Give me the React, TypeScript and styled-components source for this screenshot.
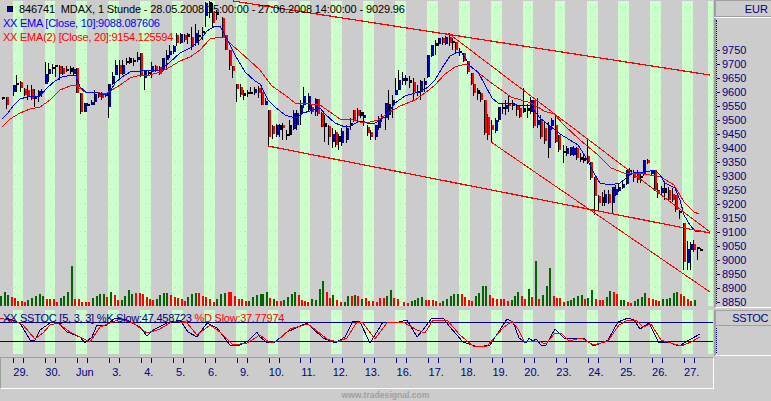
import React from "react";
import styled, { createGlobalStyle } from "styled-components";

const GlobalStyle = createGlobalStyle`
  html, body { margin: 0; padding: 0; background: #cccccc; }
  #root { width: 771px; height: 401px; overflow: hidden; }
`;

const NAVY = "#000080";
const FONT = `"Liberation Sans", Arial, sans-serif`;

const Page = styled.div`
  width: 771px;
  height: 401px;
  display: flex;
  flex-direction: column;
  background: #cccccc;
  font-family: ${FONT};
  font-size: 11px;
`;
const TopRow = styled.div`
  display: flex;
  height: 389px;
`;
const LeftCol = styled.div`
  width: 714px;
  display: flex;
  flex-direction: column;
`;
const RightCol = styled.div`
  width: 57px;
  display: flex;
  flex-direction: column;
  color: ${NAVY};
`;
const ChartPane = styled.div`
  position: relative;
  height: 306px;
  line-height: 0;
`;
const StochPane = styled.div`
  position: relative;
  height: 44px;
  margin-top: 4px;
  line-height: 0;
`;
const Drawing = styled.svg`
  display: block;
  shape-rendering: crispEdges;
`;
const Legend = styled.div`
  position: absolute;
  left: 3px;
  top: 2px;
  display: flex;
  flex-direction: column;
  line-height: 14px;
  white-space: pre;
`;
const LegendRow = styled.div<{ $color: string; $tracking: number }>`
  display: flex;
  align-items: center;
  height: 14px;
  color: ${(p) => p.$color};
  letter-spacing: ${(p) => p.$tracking}px;
`;
const SeriesMark = styled.span`
  width: 6px;
  height: 6px;
  margin: 0 6px 0 4px;
  background: #0000a0;
  border: 1px solid #000;
  box-sizing: border-box;
`;
const StochLegend = styled.div`
  position: absolute;
  left: 3px;
  top: 1px;
  line-height: 14px;
  color: ${NAVY};
  white-space: pre;
  letter-spacing: -0.24px;
`;
const RedText = styled.span`
  color: #ff0000;
`;
const TimeAxis = styled.div`
  margin-top: 3px;
  height: 30px;
  display: flex;
  padding-left: 12px;
  border-top: 1px solid #a0a0a0;
  border-left: 1px solid #a0a0a0;
  border-right: 1px solid #ffffff;
  border-bottom: 1px solid #ffffff;
`;
const DayCell = styled.div`
  width: 31.95px;
  flex: none;
  display: flex;
  flex-direction: column;
  align-items: flex-start;
`;
const TickPair = styled.div`
  width: 9px;
  height: 5px;
  border-left: 1px solid ${NAVY};
  border-right: 1px solid ${NAVY};
`;
const DayLabel = styled.div`
  width: 16px;
  margin-top: 2px;
  display: flex;
  justify-content: center;
  line-height: 14px;
  color: ${NAVY};
  white-space: nowrap;
`;
const EurBox = styled.div`
  height: 15px;
  border-top: 1px solid #a0a0a0;
  border-left: 2px solid #a0a0a0;
  border-bottom: 1px solid #a0a0a0;
  display: flex;
  align-items: center;
  justify-content: flex-end;
  padding-right: 3px;
  box-shadow: 0 1px 0 #ffffff;
`;
const PriceAxis = styled.div`
  height: 290px;
  margin-top: 1px;
  box-sizing: border-box;
  border-left: 2px solid #a0a0a0;
  padding: 2px 0 0 0;
  border-bottom: 1px solid #ffffff;
`;
const PriceTrack = styled.div`
  border-left: 1px dotted ${NAVY};
  height: 284px;
  padding-top: 23px;
  box-sizing: border-box;
`;
const PriceRow = styled.div`
  height: 14px;
  display: flex;
  align-items: center;
  gap: 2px;
  line-height: 14px;
`;
const PriceTick = styled.span`
  width: 3px;
  height: 1px;
  background: ${NAVY};
`;
const SstocBox = styled.div`
  margin-top: 2px;
  height: 14px;
  border-top: 1px solid #a0a0a0;
  border-left: 2px solid #a0a0a0;
  border-bottom: 1px solid #a0a0a0;
  display: flex;
  align-items: center;
  justify-content: flex-end;
  padding-right: 3px;
  letter-spacing: -0.4px;
`;
const StochAxis = styled.div`
  height: 30px;
  box-sizing: border-box;
  border-left: 2px solid #a0a0a0;
  border-bottom: 1px solid #ffffff;
  padding-top: 2px;
`;
const StochTrack = styled.div`
  height: 25px;
  border-left: 1px dotted ${NAVY};
`;
const Footer = styled.div`
  height: 12px;
  display: flex;
  justify-content: center;
  align-items: center;
  line-height: 12px;
  color: #a0a0a0;
  font-size: 8.6px;
  font-weight: bold;
`;

const bandStarts = [13, 45, 76, 108, 140, 172, 204, 236, 268, 300, 331, 363, 395, 427, 459, 491, 523, 555, 587, 618, 650, 682];
const bands: [number, number][] = [
  ...bandStarts.map((s): [number, number] => [s, s === 13 || s === 45 || s === 300 || s === 268 || s === 523 || s === 555 ? 10 : 11]),
  [708, 5],
];
const days = ["29.", "30.", "Jun", "3.", "4.", "5.", "6.", "9.", "10.", "11.", "12.", "13.", "16.", "17.", "18.", "19.", "20.", "23.", "24.", "25.", "26.", "27."];
const prices = Array.from({ length: 19 }, (_, i) => 9750 - i * 50);

type C = "b" | "r" | "k";
type Candle = [number, number, number, number, number, C];
const candles: Candle[] = [
  [2, 97, 97, 99, 100, "k"], [6, 97, 97, 105, 109, "r"], [13, 85, 85, 92, 96, "b"], [16, 75, 83, 85, 92, "k"],
  [20, 81, 82, 88, 92, "r"], [24, 88, 89, 95, 96, "r"], [27, 85, 90, 96, 100, "r"], [31, 85, 89, 99, 100, "r"],
  [34, 89, 96, 99, 107, "k"], [38, 90, 91, 96, 102, "b"], [41, 89, 91, 93, 97, "k"], [45, 62, 74, 84, 84, "b"],
  [48, 63, 69, 74, 82, "b"], [52, 64, 67, 69, 74, "k"], [55, 65, 65, 67, 77, "k"], [59, 65, 66, 74, 80, "r"],
  [62, 66, 68, 74, 75, "r"], [66, 66, 69, 71, 72, "k"], [70, 66, 68, 72, 74, "k"], [73, 67, 69, 74, 76, "b"],
  [76, 68, 68, 93, 93, "r"], [80, 93, 93, 112, 114, "r"], [84, 103, 103, 112, 112, "b"], [87, 103, 104, 105, 106, "k"],
  [91, 100, 102, 105, 105, "b"], [94, 90, 94, 102, 105, "b"], [98, 92, 93, 97, 98, "r"], [101, 92, 93, 98, 100, "r"],
  [105, 93, 94, 96, 97, "k"], [108, 84, 84, 107, 118, "b"], [112, 72, 76, 84, 85, "b"], [115, 60, 65, 75, 75, "b"],
  [119, 60, 65, 74, 80, "r"], [122, 60, 65, 74, 75, "b"], [126, 58, 61, 62, 65, "k"], [129, 57, 58, 63, 64, "k"],
  [133, 58, 60, 62, 66, "k"], [137, 52, 57, 60, 62, "b"], [140, 53, 53, 75, 77, "r"], [144, 70, 70, 78, 90, "b"],
  [148, 70, 72, 73, 76, "k"], [151, 62, 66, 72, 78, "b"], [155, 65, 66, 70, 72, "r"], [159, 66, 67, 74, 75, "r"],
  [162, 58, 58, 70, 72, "b"], [166, 50, 55, 60, 70, "b"], [169, 45, 51, 55, 58, "b"], [173, 45, 46, 52, 54, "b"],
  [176, 33, 35, 43, 46, "r"], [180, 33, 34, 43, 44, "b"], [184, 34, 35, 40, 42, "r"], [187, 33, 34, 37, 44, "k"],
  [191, 27, 37, 47, 50, "r"], [195, 24, 33, 43, 46, "b"], [198, 30, 35, 37, 45, "k"], [202, 27, 31, 33, 40, "k"],
  [205, 2, 3, 16, 27, "b"], [209, 1, 2, 13, 18, "k"], [212, 3, 12, 23, 27, "r"], [216, 10, 12, 15, 20, "k"],
  [222, 17, 18, 37, 38, "r"], [225, 35, 35, 50, 50, "r"], [229, 50, 50, 66, 70, "r"], [232, 66, 66, 71, 78, "r"],
  [236, 84, 84, 89, 102, "r"], [240, 84, 87, 95, 97, "r"], [243, 90, 93, 96, 100, "k"], [247, 90, 92, 93, 97, "k"],
  [250, 87, 92, 94, 94, "k"], [254, 87, 89, 93, 95, "b"], [258, 86, 88, 93, 98, "r"], [261, 85, 92, 105, 105, "r"],
  [265, 98, 101, 105, 105, "b"], [268, 110, 110, 137, 147, "r"], [272, 125, 126, 134, 139, "r"], [276, 124, 125, 135, 137, "b"],
  [279, 124, 125, 130, 137, "k"], [282, 123, 125, 128, 140, "r"], [286, 130, 134, 136, 140, "k"], [289, 120, 125, 135, 136, "k"],
  [293, 110, 113, 129, 130, "b"], [296, 110, 113, 125, 130, "b"], [300, 100, 105, 113, 125, "b"], [303, 87, 96, 105, 108, "b"],
  [308, 93, 96, 110, 112, "b"], [311, 104, 107, 112, 114, "r"], [315, 98, 99, 112, 116, "b"], [317, 99, 99, 114, 116, "r"],
  [321, 112, 113, 127, 127, "r"], [324, 115, 123, 127, 142, "k"], [328, 125, 126, 137, 145, "r"], [332, 128, 134, 142, 148, "b"],
  [335, 130, 132, 145, 147, "r"], [338, 134, 136, 142, 150, "k"], [341, 128, 131, 143, 146, "b"], [346, 125, 128, 140, 143, "b"],
  [350, 118, 123, 126, 130, "k"], [353, 110, 110, 120, 122, "r"], [357, 108, 110, 116, 122, "r"], [360, 110, 112, 116, 118, "k"],
  [363, 112, 115, 118, 126, "b"], [367, 125, 127, 133, 136, "r"], [370, 130, 132, 137, 140, "r"], [375, 125, 125, 137, 140, "b"],
  [378, 116, 118, 128, 130, "b"], [381, 114, 116, 118, 122, "k"], [385, 103, 103, 118, 130, "b"], [388, 90, 104, 115, 120, "k"],
  [392, 95, 100, 104, 118, "b"], [395, 78, 90, 95, 95, "b"], [398, 70, 80, 90, 90, "b"], [402, 72, 78, 81, 85, "b"],
  [405, 75, 78, 81, 85, "k"], [409, 76, 80, 83, 88, "k"], [413, 78, 82, 92, 100, "r"], [417, 85, 91, 93, 96, "k"],
  [420, 80, 81, 92, 100, "b"], [424, 78, 81, 85, 92, "b"], [427, 55, 55, 77, 78, "b"], [431, 45, 45, 56, 57, "b"],
  [435, 40, 43, 46, 55, "k"], [438, 38, 38, 44, 46, "b"], [442, 37, 38, 43, 45, "r"], [445, 36, 37, 44, 45, "b"],
  [449, 33, 37, 43, 46, "r"], [452, 38, 41, 43, 50, "k"], [455, 42, 42, 50, 54, "r"], [459, 48, 51, 53, 56, "k"],
  [463, 53, 53, 61, 62, "r"], [467, 61, 61, 72, 74, "r"], [471, 73, 73, 84, 85, "r"], [473, 84, 84, 93, 96, "r"],
  [477, 88, 90, 94, 100, "k"], [480, 92, 93, 100, 102, "r"], [484, 100, 100, 133, 135, "r"], [487, 114, 117, 135, 140, "r"],
  [491, 120, 125, 130, 142, "r"], [495, 118, 120, 131, 133, "b"], [498, 107, 107, 120, 122, "b"], [502, 104, 107, 109, 114, "k"],
  [505, 100, 105, 109, 115, "b"], [508, 96, 104, 106, 112, "r"], [512, 100, 103, 106, 110, "k"], [516, 104, 105, 110, 116, "r"],
  [519, 106, 108, 117, 118, "r"], [523, 88, 108, 112, 113, "k"], [527, 104, 108, 111, 118, "k"], [530, 97, 100, 112, 114, "b"],
  [533, 100, 100, 126, 128, "r"], [537, 98, 120, 125, 128, "b"], [540, 115, 119, 137, 139, "r"], [544, 122, 128, 141, 144, "r"],
  [548, 122, 126, 148, 158, "b"], [551, 118, 120, 126, 130, "b"], [555, 114, 125, 142, 143, "r"], [558, 135, 135, 150, 152, "r"],
  [563, 145, 151, 153, 163, "k"], [566, 146, 148, 154, 156, "b"], [570, 147, 147, 155, 156, "b"], [573, 146, 148, 155, 156, "b"],
  [576, 147, 148, 158, 160, "r"], [580, 153, 157, 160, 162, "k"], [583, 155, 158, 161, 163, "k"], [587, 140, 156, 162, 164, "r"],
  [590, 162, 162, 178, 180, "r"], [594, 177, 177, 196, 215, "r"], [598, 195, 196, 203, 210, "r"], [602, 192, 197, 203, 206, "b"],
  [604, 190, 194, 203, 206, "b"], [608, 190, 194, 203, 204, "r"], [612, 187, 187, 203, 214, "b"], [615, 185, 189, 195, 196, "b"],
  [618, 183, 187, 191, 192, "b"], [622, 180, 184, 188, 189, "b"], [626, 170, 170, 184, 185, "b"], [629, 168, 170, 172, 175, "k"],
  [633, 170, 172, 178, 182, "r"], [637, 170, 172, 180, 183, "r"], [640, 172, 176, 178, 183, "k"], [643, 160, 160, 175, 176, "b"],
  [647, 159, 160, 163, 164, "r"], [651, 170, 171, 174, 176, "b"], [654, 170, 170, 190, 191, "r"], [657, 183, 190, 193, 198, "r"],
  [661, 186, 188, 193, 195, "b"], [664, 183, 188, 193, 200, "k"], [668, 187, 190, 200, 201, "r"], [672, 188, 194, 200, 202, "r"],
  [675, 195, 195, 210, 212, "r"], [679, 210, 211, 213, 219, "k"], [683, 223, 223, 262, 270, "r"], [687, 241, 249, 263, 270, "b"],
  [690, 242, 244, 250, 270, "b"], [693, 240, 244, 250, 252, "r"], [697, 248, 247, 249, 260, "k"], [700, 248, 249, 250, 251, "k"],
];

const blueEma = "2,119 8,113 14,105 20,99 27,97 33,96 40,96 47,88 55,81 62,77 72,75 76,76 80,87 86,92 94,92 106,95 110,92 115,83 122,77 130,72 140,71 150,70 160,70 170,62 180,53 190,48 200,40 207,31 215,26 220,26 226,37 235,55 245,72 255,81 260,84 268,100 275,107 285,115 295,118 303,113 310,111 320,108 325,114 335,123 345,127 350,126 358,122 362,121 370,124 375,123 385,117 395,103 405,96 415,93 420,92 428,87 435,80 442,68 450,56 458,52 462,53 470,66 478,72 485,85 492,98 498,103 510,103 520,106 530,105 540,118 550,126 560,134 570,140 578,145 585,156 590,165 595,175 600,183 610,185 620,183 630,175 635,172 645,172 655,170 660,175 665,183 675,188 680,200 684,215 690,225 695,231 700,232";
const redEma = "2,127 10,119 20,113 30,109 40,107 50,100 60,90 70,86 75,85 85,92 95,92 105,94 112,90 120,85 130,78 140,75 150,75 160,72 170,67 180,61 190,57 200,50 210,39 220,37 225,38 232,45 240,52 250,61 260,70 272,86 285,95 295,103 310,104 320,105 330,112 340,119 350,119 360,122 370,122 378,120 390,112 400,106 415,100 425,93 435,85 445,74 455,67 465,64 470,66 480,74 490,82 500,89 511,97 521,100 531,103 538,107 544,111 554,114 564,125 580,140 598,155 611,168 624,173 644,174 661,177 674,185 684,202 694,212 699,214";
const stochK = "6,318 20,323 30,340 35,340 40,330 50,323 58,322 67,332 80,337 85,343 92,337 97,325 107,325 115,318 127,320 140,327 147,336 153,330 167,323 180,320 188,332 197,337 207,323 217,328 230,345 240,345 248,341 257,332 260,337 268,343 275,342 287,332 307,323 323,338 335,343 345,337 353,321 360,322 370,343 383,322 395,323 407,320 417,337 423,330 432,318 443,318 450,327 463,342 478,347 490,345 507,319 513,322 519,338 526,343 529,338 533,341 536,339 541,345 546,345 555,329 564,338 573,338 583,338 594,346 608,340 618,322 628,318 634,320 640,329 649,323 659,343 668,342 679,346 691,339 700,334";
const stochD = "0,318 17,322 23,325 35,339 43,333 50,325 58,323 70,332 80,337 90,342 100,327 110,323 120,319 133,323 147,333 160,329 173,321 187,323 197,335 210,325 220,332 233,345 247,343 260,335 270,343 277,341 290,329 308,324 327,339 337,342 347,338 357,322 363,323 375,339 387,323 403,322 417,330 425,333 433,320 447,320 460,335 473,346 487,346 503,328 512,321 518,329 524,341 538,341 546,344 554,334 561,333 569,341 581,338 594,345 608,341 619,325 628,320 636,320 643,327 651,324 661,340 671,343 681,346 691,342 700,337";

type V = [number, number, "g" | "r"];
const seg = (base: number, items: V[]): V[] => items.map(([x, h, c]): V => [base + x / 3, h, c]);
const volumes: V[] = [
  ...seg(0, [[4,10,"g"],[15,14,"g"],[25,11,"g"],[35,9,"r"],[45,8,"r"],[55,5,"r"],[65,5,"r"],[75,4,"r"],[85,6,"g"],[97,8,"g"],[108,10,"g"],[120,12,"g"],[130,10,"g"],[140,7,"r"],[151,7,"r"],[162,7,"r"],[172,4,"r"],[183,8,"g"],[193,10,"g"],[204,14,"g"],[215,40,"g"],[225,7,"r"],[237,7,"r"],[247,4,"r"],[258,4,"r"],[268,4,"r"],[279,8,"g"],[290,10,"g"],[300,12,"g"],[312,12,"g"],[322,9,"r"],[333,14,"g"],[345,11,"r"],[355,6,"r"],[365,6,"g"],[375,10,"g"],[387,16,"g"],[397,12,"g"],[409,13,"r"],[419,13,"r"],[430,12,"r"],[440,9,"r"],[450,7,"r"],[460,6,"r"],[470,7,"g"],[480,11,"g"],[492,13,"g"],[502,13,"g"],[514,11,"r"],[525,9,"r"],[535,8,"r"],[545,7,"r"],[555,5,"r"],[565,9,"g"],[577,12,"g"],[587,13,"g"],[597,13,"r"],[608,10,"r"],[618,9,"r"],[630,7,"r"],[642,4,"r"],[652,7,"g"],[662,12,"g"],[674,13,"g"],[686,14,"r"],[694,14,"r"],[705,10,"r"],[717,7,"r"],[727,7,"r"],[737,5,"r"],[748,5,"g"],[758,9,"g"],[770,11,"g"]]),
  ...seg(260, [[3,12,"g"],[10,12,"g"],[20,14,"g"],[30,8,"r"],[42,7,"g"],[52,5,"r"],[62,5,"r"],[72,6,"g"],[84,9,"g"],[96,12,"g"],[105,14,"g"],[116,11,"r"],[125,6,"r"],[135,5,"r"],[145,4,"r"],[157,7,"g"],[167,6,"g"],[180,17,"g"],[188,25,"g"],[200,14,"r"],[210,8,"r"],[220,11,"g"],[232,6,"r"],[243,4,"r"],[255,4,"g"],[265,10,"g"],[275,10,"r"],[285,11,"g"],[295,10,"r"],[305,7,"g"],[317,8,"r"],[328,5,"r"],[340,5,"r"],[350,4,"r"],[360,8,"r"],[372,8,"r"],[382,10,"g"],[393,16,"g"],[403,8,"r"],[415,7,"r"],[433,4,"r"],[443,3,"r"],[455,5,"g"],[465,6,"g"],[475,8,"g"],[487,9,"g"],[497,6,"r"],[508,6,"r"],[519,6,"r"],[528,5,"r"],[540,3,"r"],[550,5,"g"],[560,7,"g"],[572,10,"g"],[583,12,"g"],[593,12,"g"],[605,12,"r"],[615,9,"r"],[627,6,"r"],[637,5,"r"],[648,10,"g"],[658,13,"g"],[668,20,"g"],[678,20,"g"],[690,11,"r"],[700,8,"r"],[710,7,"r"],[722,7,"r"],[732,7,"r"],[744,5,"r"],[755,6,"g"],[765,10,"g"],[775,14,"g"]]),
  ...seg(511, [[22,12,"g"],[32,10,"r"],[42,7,"r"],[53,17,"g"],[63,9,"r"],[75,45,"g"],[84,7,"r"],[95,11,"g"],[107,20,"g"],[117,38,"g"],[128,10,"r"],[138,8,"r"],[148,8,"r"],[158,4,"r"],[170,5,"g"],[180,6,"g"],[190,8,"g"],[200,10,"g"],[212,11,"g"],[222,7,"r"],[232,8,"g"],[244,16,"g"],[254,7,"r"],[266,6,"r"],[275,6,"r"],[287,9,"g"],[297,15,"g"],[308,14,"r"],[319,12,"r"],[329,6,"g"],[339,6,"g"],[350,4,"r"],[360,3,"r"],[371,5,"g"],[381,7,"g"],[392,9,"g"],[403,13,"g"],[414,8,"r"],[425,7,"r"],[435,6,"r"],[445,5,"r"],[456,7,"g"],[467,7,"g"],[478,8,"g"],[488,13,"g"],[498,14,"g"],[509,12,"r"],[520,10,"r"],[530,7,"r"],[541,5,"r"],[551,6,"g"]]),
];

const colorOf: Record<C, string> = { b: "#0000d0", r: "#ff0000", k: "#000000" };

const Bands = ({ top, height }: { top: number; height: number }) => (
  <>
    {bands.map(([x, w]) => (
      <rect key={x} x={x} y={top} width={w} height={height} fill="#ccffcc" />
    ))}
  </>
);

const GridDots = ({ rows }: { rows: number[] }) => {
  const dots: React.ReactNode[] = [];
  bands.forEach(([x, w]) => {
    for (let dx = Math.ceil((x + 1) / 5) * 5; dx < x + w; dx += 5) {
      rows.forEach((y) => {
        dots.push(<rect key={`${dx}-${y}`} x={dx} y={y} width={1} height={1} fill="#d9c9d2" />);
      });
    }
  });
  return <>{dots}</>;
};

const priceRows = Array.from({ length: 22 }, (_, i) => 7 + i * 14);

const PriceChart = () => (
  <Drawing width={714} height={306} viewBox="0 0 714 306">
    <Bands top={1} height={305} />
    <GridDots rows={priceRows} />
    {volumes.map(([x, h, c], i) => (
      <rect key={i} x={Math.round(x) - 1} y={306 - h} width={2} height={h} fill={c === "g" ? "#006600" : "#ff0000"} />
    ))}
    {candles.map(([x, hi, top, bot, lo, c]) => (
      <g key={x}>
        <rect x={x} y={hi} width={1} height={lo - hi} fill="#000" />
        <rect x={x} y={top} width={3} height={Math.max(bot - top, 2)} fill={colorOf[c]} />
        <rect x={x} y={top} width={1} height={Math.max(bot - top, 2)} fill="#000" />
      </g>
    ))}
    <polyline points={redEma} fill="none" stroke="#ff0000" strokeWidth={1} />
    <polyline points={blueEma} fill="none" stroke="#0000ff" strokeWidth={1} />
    <line x1={233} y1={1} x2={710} y2={75} stroke="#ff0000" strokeWidth={1.25} />
    <line x1={268} y1={146} x2={710} y2={233} stroke="#ff0000" strokeWidth={1.25} />
    <line x1={448} y1={33} x2={710} y2={232} stroke="#ff0000" strokeWidth={1} />
    <line x1={491} y1={142} x2={710} y2={292} stroke="#ff0000" strokeWidth={1} />
  </Drawing>
);

const StochChart = () => (
  <Drawing width={714} height={44} viewBox="0 310 714 44">
    <Bands top={310} height={44} />
    <GridDots rows={[313, 331, 349]} />
    <line x1={0} y1={322.5} x2={713} y2={322.5} stroke="#000080" strokeWidth={1} />
    <line x1={0} y1={341.5} x2={713} y2={341.5} stroke="#000080" strokeWidth={1} />
    <polyline points={stochK} fill="none" stroke="#000080" strokeWidth={1} />
    <polyline points={stochD} fill="none" stroke="#ff0000" strokeWidth={1} />
  </Drawing>
);

export default function App() {
  return (
    <>
      <GlobalStyle />
      <Page>
        <TopRow>
          <LeftCol>
            <ChartPane>
              <PriceChart />
              <Legend>
                <LegendRow $color="#000000" $tracking={-0.13}>
                  <SeriesMark />
                  {"846741  MDAX, 1 Stunde - 28.05.2008 15:00:00 - 27.06.2008 14:00:00 - 9029.96"}
                </LegendRow>
                <LegendRow $color="#0000ff" $tracking={-0.24}>XX EMA [Close, 10]:9088.087606</LegendRow>
                <LegendRow $color="#ff0000" $tracking={-0.24}>XX EMA(2) [Close, 20]:9154.125594</LegendRow>
              </Legend>
            </ChartPane>
            <StochPane>
              <StochChart />
              <StochLegend>
                XX SSTOC [5, 3, 3] %K Slow:47.458723 <RedText>%D Slow:37.77974</RedText>
              </StochLegend>
            </StochPane>
            <TimeAxis>
              {days.map((d) => (
                <DayCell key={d}>
                  <TickPair />
                  <DayLabel>{d}</DayLabel>
                </DayCell>
              ))}
            </TimeAxis>
          </LeftCol>
          <RightCol>
            <EurBox>EUR</EurBox>
            <PriceAxis>
              <PriceTrack>
                {prices.map((p) => (
                  <PriceRow key={p}>
                    <PriceTick />
                    {p}
                  </PriceRow>
                ))}
              </PriceTrack>
            </PriceAxis>
            <SstocBox>SSTOC</SstocBox>
            <StochAxis>
              <StochTrack />
            </StochAxis>
          </RightCol>
        </TopRow>
        <Footer>www.tradesignal.com</Footer>
      </Page>
    </>
  );
}
